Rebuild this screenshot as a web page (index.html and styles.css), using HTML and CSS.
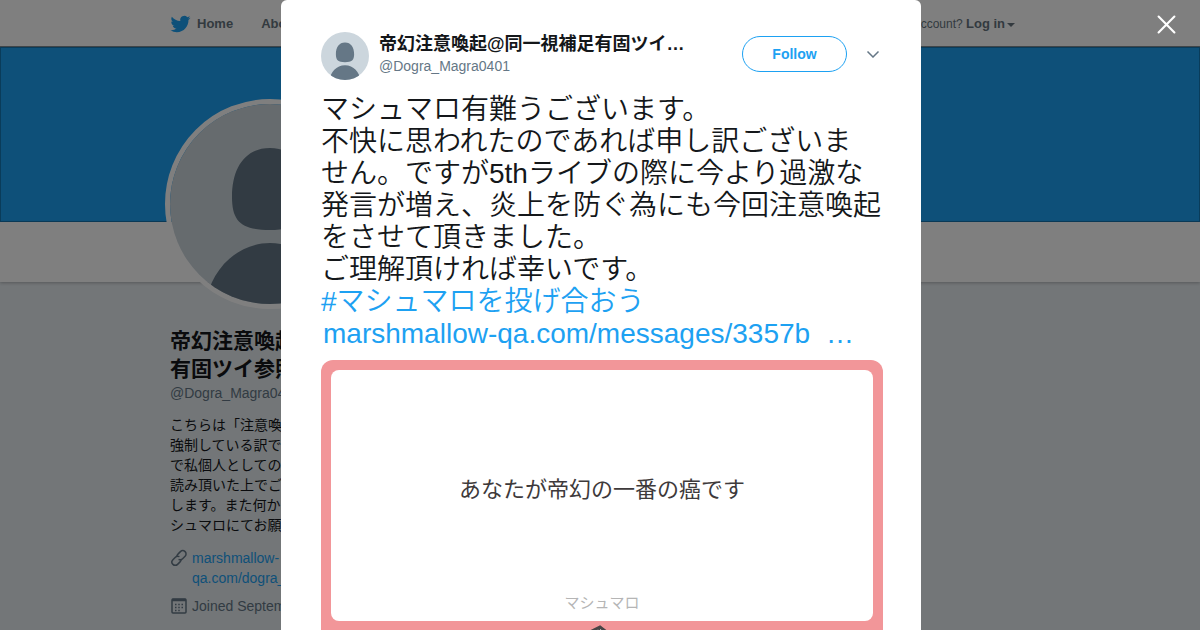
FILE: index.html
```html
<!DOCTYPE html>
<html lang="ja">
<head>
    <meta charset="UTF-8">
    <meta name="viewport" content="width=device-width, initial-scale=1">
    <title>Twitter</title>
    <link rel="stylesheet" href="styles.css">
</head>
<body>
    <!-- Avatar, used in the profile and in the tweet -->
    <svg class="sprite" aria-hidden="true">
        <symbol id="egg" viewBox="0 0 200 200">
            <rect width="200" height="200" fill="#ccd6dd"/>
            <path d="M100 44c25 0 38 20 38 49 0 25-10 33-38 33s-38-8-38-33c0-29 13-49 38-49zM36 200c3-30 28-61 64-61s61 31 64 61z" fill="#657786"/>
        </symbol>
    </svg>

    <header class="topbar">
        <div class="container topbar-inner">
            <nav class="topnav">
                <a class="home" href="#">
                    <svg class="bird" viewBox="0 0 24 24"><path d="M23.954 4.569a10 10 0 0 1-2.825.775 4.958 4.958 0 0 0 2.163-2.723 9.99 9.99 0 0 1-3.127 1.184 4.92 4.92 0 0 0-8.384 4.482C7.691 8.094 4.066 6.13 1.64 3.161a4.822 4.822 0 0 0-.666 2.475c0 1.71.87 3.213 2.188 4.096a4.904 4.904 0 0 1-2.228-.616v.061a4.923 4.923 0 0 0 3.946 4.827 4.996 4.996 0 0 1-2.212.085 4.937 4.937 0 0 0 4.604 3.417 9.868 9.868 0 0 1-6.102 2.105c-.39 0-.779-.023-1.17-.067a13.995 13.995 0 0 0 7.557 2.209c9.054 0 13.999-7.496 13.999-13.986 0-.209 0-.42-.015-.63a9.936 9.936 0 0 0 2.46-2.548z"/></svg>
                    Home
                </a>
                <a href="#">About</a>
            </nav>
            <div class="signin">
                <span>Have an account?</span>
                <a href="#">Log in<i class="caret"></i></a>
            </div>
        </div>
    </header>

    <div class="banner">
        <div class="container">
            <svg class="profile-avatar"><use href="#egg"/></svg>
        </div>
    </div>
    <div class="profile-nav"></div>

    <main class="container">
        <aside class="profile">
            <h1>帝幻注意喚起@同一視補足<br>有固ツイ参照</h1>
            <div class="handle">@Dogra_Magra0401</div>
            <p class="bio">こちらは「注意喚起」<br>強制している訳では<br>で私個人としての意<br>読み頂いた上でご覧<br>します。また何かマ<br>シュマロにてお願い</p>
            <div class="meta">
                <svg class="meta-icon" viewBox="0 0 18 18"><g transform="rotate(-45 9 9)"><path d="M9.500 11.500a3.200 3.200 0 0 1-2.500 1H3.500a3.300 3.300 0 0 1 0-6.600H7a3.300 3.300 0 0 1 3.200 2.500"/><path d="M8.500 6.500a3.200 3.200 0 0 1 2.500-1h3.500a3.300 3.300 0 0 1 0 6.600H11a3.300 3.300 0 0 1-3.200-2.500"/></g></svg>
                <a href="#">marshmallow-<br>qa.com/dogra_</a>
            </div>
            <div class="meta">
                <svg class="meta-icon" viewBox="0 0 18 18"><rect x="2" y="2" width="14" height="14" rx="1"/><path d="M2 3h14" stroke-width="2.500"/><path d="M5 7.500h8.500M5 10.500h8.500M5 13.500h5" stroke-dasharray="1.500 1.750" stroke-width="1.500"/></svg>
                <span>Joined September</span>
            </div>
        </aside>
    </main>

    <div class="overlay">
        <article class="tweet">
            <div class="tweet-head">
                <svg class="avatar"><use href="#egg"/></svg>
                <div class="author">
                    <div class="name">帝幻注意喚起@同一視補足有固ツイ…</div>
                    <div class="handle">@Dogra_Magra0401</div>
                </div>
                <button class="follow">Follow</button>
                <button class="more" aria-label="More">
                    <svg viewBox="0 0 14 8"><path d="M1.500 1.500L7 7l5.500-5.500"/></svg>
                </button>
            </div>
            <p class="tweet-text">マシュマロ有難うございます。<br>不快に思われたのであれば申し訳ございま<br>せん。ですが5thライブの際に今より過激な<br>発言が増え、炎上を防ぐ為にも今回注意喚起<br>をさせて頂きました。<br>ご理解頂ければ幸いです。<br><a href="#">#マシュマロを投げ合おう</a><br><a class="link" href="#">marshmallow-qa.com/messages/3357b<span>…</span></a></p>
            <div class="card">
                <div class="message">
                    <div class="question">あなたが帝幻の一番の癌です</div>
                    <div class="brand">マシュマロ</div>
                </div>
                <svg class="mascot" viewBox="0 0 40 30"><path d="M2 14L6 9l12-6 9 7 8 12-5 8H6z" fill="#fff" stroke="#4a4446" stroke-width="3"/><path d="M17 4l1 8 9-2" fill="none" stroke="#4a4446" stroke-width="2"/></svg>
            </div>
        </article>
        <button class="close" aria-label="Close">
            <svg viewBox="0 0 18 18"><path d="M1.500 1.500l15 15M16.500 1.500l-15 15"/></svg>
        </button>
    </div>
</body>
</html>
```

FILE: styles.css
```css
html, body {
    height: 100%;
}
body {
    margin: 0;
    overflow: hidden;
    background-color: #e6ecf0;
    color: #14171a;
    font-family: "Liberation Sans", Arial, "Noto Sans CJK JP", sans-serif;
    font-size: 14px;
    line-height: 20px;
}
a {
    color: #1da1f2;
    text-decoration: none;
}
button {
    padding: 0;
    border: none;
    background: none;
    cursor: pointer;
}
.sprite {
    position: absolute;
    width: 0;
    height: 0;
}
.container {
    position: relative;
    max-width: 860px;
    margin: 0 auto;
}

/* Top bar */
.topbar {
    background-color: #fff;
    border-bottom: 1px solid #7f8b92;
    font-size: 13px;
}
.topbar a, .signin {
    color: #66757f;
}
.topbar a {
    font-weight: bold;
}
.topbar-inner {
    display: flex;
    justify-content: space-between;
    align-items: center;
    height: 44px;
    padding-top: 2px;
}
.topnav {
    display: flex;
    gap: 28px;
}
.home {
    display: flex;
    align-items: center;
    gap: 6px;
}
.bird {
    width: 21px;
    height: 20px;
    fill: #1da1f2;
}
.signin {
    padding-right: 15px;
    font-size: 12px;
}
.signin a {
    font-size: 13px;
}
.caret {
    display: inline-block;
    margin-left: 2px;
    border: 4px solid transparent;
    border-top-color: #66757f;
    border-bottom: none;
    vertical-align: middle;
}

/* Profile */
.banner {
    height: 175px;
    background-color: #1da1f2;
    box-shadow: inset 0 0 0 1px rgba(0, 0, 0, 0.25);
}
.profile-avatar {
    position: absolute;
    top: 52px;
    left: -5px;
    width: 200px;
    height: 200px;
    border: 5px solid #fff;
    border-radius: 50%;
}
.profile-nav {
    height: 60px;
    background-color: #fff;
    box-shadow: 0 1px 3px rgba(0, 0, 0, 0.25);
}
.profile {
    width: 270px;
    padding-top: 45px;
}
.profile h1 {
    margin: 0;
    font-size: 21px;
    line-height: 28px;
}
.handle {
    color: #657786;
}
.bio {
    margin: 12px 0 13px;
}
.meta {
    display: flex;
    gap: 4px;
    margin-bottom: 8px;
    color: #657786;
}
.meta-icon {
    flex: none;
    width: 18px;
    height: 20px;
    fill: none;
    stroke: #657786;
    stroke-width: 1.5;
}

/* Tweet popup */
.overlay {
    position: fixed;
    inset: 0;
    display: flex;
    justify-content: center;
    align-items: flex-start;
    padding-left: 2px;
    overflow: hidden;
    background-color: rgba(0, 0, 0, 0.5);
}
.tweet {
    box-sizing: border-box;
    width: 640px;
    max-width: 100%;
    padding: 32px 38px 40px 40px;
    border-radius: 6px;
    background-color: #fff;
}
.tweet-head {
    display: flex;
    align-items: flex-start;
    padding-right: 2px;
}
.avatar {
    flex: none;
    width: 48px;
    height: 48px;
    margin-right: 10px;
    border-radius: 50%;
}
.author {
    flex: 1;
}
.name {
    font-size: 18px;
    font-weight: bold;
    line-height: 24px;
    white-space: nowrap;
}
.follow, .more {
    height: 36px;
    margin-top: 4px;
}
.follow {
    width: 105px;
    margin-right: 18px;
    border: 1px solid #1da1f2;
    border-radius: 18px;
    color: #1da1f2;
    font: bold 14px "Liberation Sans", Arial, sans-serif;
}
.more {
    display: flex;
    width: 16px;
    justify-content: center;
    align-items: center;
}
.more svg {
    width: 14px;
    height: 8px;
    fill: none;
    stroke: #657786;
    stroke-width: 1.5;
}
.tweet-text {
    margin: 14px 0 10px;
    font-size: 28px;
    font-weight: 350;
    line-height: 32px;
    white-space: nowrap;
}
.link {
    padding-left: 2px;
}
.link span {
    margin-left: 16px;
}
.card {
    padding: 10px 10px 40px;
    border-radius: 12px;
    background-color: #f29699;
}
.message {
    display: flex;
    flex-direction: column;
    align-items: center;
    justify-content: flex-end;
    height: 251px;
    border-radius: 8px;
    background-color: #fff;
}
.question {
    margin-bottom: 89px;
    color: #3e3a3b;
    font-family: "Noto Sans CJK JP", sans-serif;
    font-size: 22px;
    line-height: 32px;
}
.brand {
    margin-bottom: 9px;
    color: #b5b5b5;
    font-family: "Noto Sans CJK JP", sans-serif;
    font-size: 15px;
}
.mascot {
    display: block;
    width: 40px;
    height: 30px;
    margin: 3px auto 0;
}
.close {
    position: absolute;
    top: 15px;
    right: 24px;
}
.close svg {
    display: block;
    width: 19px;
    height: 19px;
    fill: none;
    stroke: #fff;
    stroke-width: 2;
    stroke-linecap: round;
}
```
